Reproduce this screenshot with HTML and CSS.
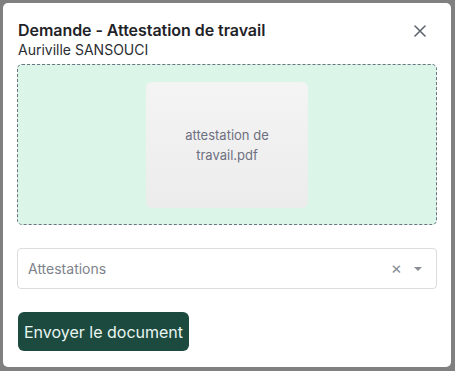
FILE: index.html
```html
<!DOCTYPE html>
<html lang="fr">
<head>
  <meta charset="UTF-8">
  <title>Demande - Attestation de travail</title>
  <link rel="stylesheet" href="styles.css">
</head>
<body>
  <div class="backdrop">
    <div class="modal">
      <!-- Header -->
      <div class="modal-header">
        <div>
          <h2 class="modal-title">Demande - Attestation de travail</h2>
          <p class="modal-sub">Auriville SANSOUCI</p>
        </div>
        <button class="close-btn" aria-label="Fermer">
          <svg width="12" height="12" viewBox="0 0 12 12">
            <path d="M1 1 L11 11 M11 1 L1 11" stroke="#5f6670" stroke-width="1.6" stroke-linecap="round"/>
          </svg>
        </button>
      </div>

      <!-- Dropzone -->
      <div class="dropzone">
        <div class="file-preview">
          <span>attestation de travail.pdf</span>
        </div>
      </div>

      <!-- Select -->
      <div class="select">
        <span class="select-placeholder">Attestations</span>
        <span class="select-clear">&times;</span>
        <span class="select-arrow"></span>
      </div>

      <button class="send-btn">Envoyer le document</button>
    </div>
  </div>
</body>
</html>
```

FILE: styles.css
```css
* {
  box-sizing: border-box;
}
body {
  margin: 0;
  background-color: #808080;
  font-family: 'Inter', 'Noto Sans', sans-serif;
  color: #212529;
}
.backdrop {
  width: 455px;
  height: 371px;
  padding: 3px 4px 4px 3px;
}
.modal {
  background-color: #fff;
  border-radius: 5px;
  height: 364px;
  padding: 16px 14px 0 14px;
}
.modal-header {
  display: flex;
  justify-content: space-between;
  align-items: flex-start;
  padding-left: 1px;
}
.modal-title {
  margin: 0;
  font-size: 16px;
  font-weight: 600;
  line-height: 22px;
  color: #1f2328;
  letter-spacing: -0.05px;
}
.modal-sub {
  margin: 0;
  font-size: 14px;
  line-height: 18px;
  color: #2a2d31;
}
.close-btn {
  border: none;
  background: none;
  padding: 0;
  margin: 6px 11px 0 0;
  width: 12px;
  height: 12px;
  cursor: pointer;
  display: flex;
}
.dropzone {
  margin-top: 5px;
  height: 161px;
  border: 1px dashed #6b7480;
  border-radius: 5px;
  background-color: #dbf5e9;
  display: flex;
  justify-content: center;
  align-items: flex-start;
  padding-top: 17px;
}
.file-preview {
  width: 162px;
  height: 126px;
  border-radius: 6px;
  background: linear-gradient(to bottom, #f4f4f4, #ececec);
  display: flex;
  align-items: center;
  justify-content: center;
  text-align: center;
  padding: 0 28px;
  font-size: 13px;
  line-height: 20px;
  color: #6e6f80;
}
.select {
  margin-top: 23px;
  height: 41px;
  border: 1px solid #dcdcdc;
  border-radius: 4px;
  display: flex;
  align-items: center;
  padding: 0 14px 0 10px;
}
.select-placeholder {
  flex: 1;
  font-size: 14px;
  color: #7e828b;
}
.select-clear {
  font-size: 17px;
  color: #8a8d93;
  margin-right: 12px;
  line-height: 1;
}
.select-arrow {
  width: 0;
  height: 0;
  border-left: 4px solid transparent;
  border-right: 4px solid transparent;
  border-top: 4px solid #8a8d93;
}
.send-btn {
  margin: 23px 0 0 1px;
  display: block;
  height: 39px;
  padding: 0 6px;
  border: none;
  border-radius: 6px;
  background-color: #1c4a3f;
  color: #eaf6f1;
  font-family: 'Inter', 'Noto Sans', sans-serif;
  font-size: 16px;
  cursor: pointer;
}
```
